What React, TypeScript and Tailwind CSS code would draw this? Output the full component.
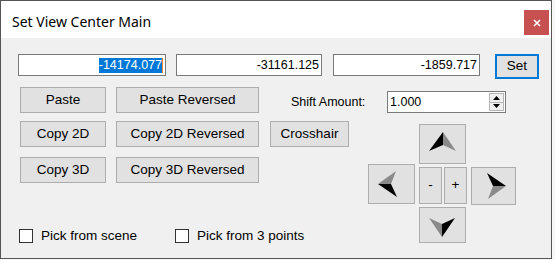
import React from "react";

function Btn({ w, h = 26, children, className = "" }: { w: number; h?: number; children?: React.ReactNode; className?: string }) {
  return (
    <div
      className={"flex items-center justify-center bg-[#e1e1e1] border border-[#adadad] text-[13.5px] text-black shrink-0 whitespace-nowrap " + className}
      style={{ width: w, height: h }}
    >
      {children}
    </div>
  );
}

function Field({ w, children }: { w: number; children?: React.ReactNode }) {
  return (
    <div
      className="h-[22px] bg-white border border-[#7a7a7a] flex items-center justify-end pr-[2px] text-[12.5px] text-black shrink-0"
      style={{ width: w }}
    >
      {children}
    </div>
  );
}

function Check({ label }: { label: string }) {
  return (
    <div className="flex items-center whitespace-nowrap">
      <div className="w-[14px] h-[14px] bg-white border border-[#333333] shrink-0" />
      <span className="ml-[8px] text-[13.5px] text-black">{label}</span>
    </div>
  );
}

export default function App() {
  return (
    <div className="w-[555px] h-[260px] bg-[#f7f7f7] overflow-hidden font-['Liberation_Sans',Arial,sans-serif]">
      <div className="w-[552px] h-[259px] border border-[#555555] flex flex-col bg-[#f0f0f0]">
        {/* title bar */}
        <div className="h-[37px] bg-white flex items-start justify-between pl-[11px] pr-[2px] shrink-0">
          <div className="pt-[11px] text-[14px] text-black font-['Noto_Sans',sans-serif] leading-[20px]">Set View Center Main</div>
          <div className="mt-[9px] w-[25px] h-[25px] bg-[#c75050] flex items-center justify-center">
            <svg width="8" height="8" viewBox="0 0 8 8">
              <path d="M1 1 L7 7 M7 1 L1 7" stroke="white" strokeWidth="1.6" />
            </svg>
          </div>
        </div>

        {/* body */}
        <div className="flex-1 flex flex-col pl-[17px] pt-[16px]">
          {/* row 1 */}
          <div className="flex items-start">
            <Field w={148}>
              <span className="bg-[#0078d7] text-white leading-[15px] h-[15px]">-14174.077</span>
              <span className="w-[1px] h-[15px] bg-[#ff8728]" />
            </Field>
            <div className="ml-[10px]">
              <Field w={146}>-31161.125</Field>
            </div>
            <div className="ml-[11px]">
              <Field w={147}>-1859.717</Field>
            </div>
            <div className="ml-[15px] w-[44px] h-[25px] border-2 border-[#0078d7] bg-[#e1e1e1] flex items-center justify-center text-[13.5px] text-black">
              Set
            </div>
          </div>

          {/* row 2 */}
          <div className="flex items-start mt-[8px] pl-[2px]">
            <Btn w={86}>Paste</Btn>
            <Btn w={143} className="ml-[10px]">Paste Reversed</Btn>
            <div className="ml-[32px] w-[96px] h-[22px] mt-[4px] flex items-center text-[12.5px] text-black whitespace-nowrap">Shift Amount:</div>
            <div className="mt-[4px] w-[119px] h-[22px] bg-white border border-[#7a7a7a] flex items-center justify-between pl-[2px] pr-[1px] text-[12.5px] text-black">
              <span>1.000</span>
              <div className="w-[15px] h-[18px] flex flex-col border border-[#b5b5b5] bg-[#f0f0f0]">
                <div className="flex-1 flex items-center justify-center border-b border-[#b5b5b5]">
                  <svg width="7" height="4" viewBox="0 0 7 4" className="shrink-0"><path d="M3.5 0 L7 4 L0 4 Z" fill="black" /></svg>
                </div>
                <div className="flex-1 flex items-center justify-center">
                  <svg width="7" height="4" viewBox="0 0 7 4" className="shrink-0"><path d="M0 0 L7 0 L3.5 4 Z" fill="black" /></svg>
                </div>
              </div>
            </div>
          </div>

          {/* rows 3+ */}
          <div className="flex items-start pl-[2px]">
            <div className="w-[348px] flex flex-col mt-[8px]">
              <div className="flex items-start">
                <Btn w={86}>Copy 2D</Btn>
                <Btn w={143} className="ml-[10px]">Copy 2D Reversed</Btn>
                <Btn w={79} className="ml-[11px]">Crosshair</Btn>
              </div>
              <div className="flex items-start mt-[10px]">
                <Btn w={86}>Copy 3D</Btn>
                <Btn w={143} className="ml-[10px]">Copy 3D Reversed</Btn>
              </div>
              <div className="flex items-center mt-[43px] -ml-[1px]">
                <div className="w-[156px] shrink-0">
                  <Check label="Pick from scene" />
                </div>
                <Check label="Pick from 3 points" />
              </div>
            </div>

            {/* arrow cluster */}
            <div className="flex items-start mt-[11px]">
              <Btn w={47} h={40} className="mt-[40px]">
                <svg width="45" height="38" viewBox="1 1 45 38" className="shrink-0">
                  <path d="M10 20 L28 7 L23 20 Z" fill="#8a8a8a" />
                  <path d="M10 20 L23 20 L29 33 Z" fill="black" />
                </svg>
              </Btn>
              <div className="flex flex-col ml-[4px]">
                <Btn w={47} h={40}>
                  <svg width="45" height="38" viewBox="1 1 45 38" className="shrink-0">
                    <path d="M24 8 L10 27 L24 21 Z" fill="black" />
                    <path d="M24 8 L24 21 L37 27 Z" fill="#8a8a8a" />
                  </svg>
                </Btn>
                <div className="flex mt-[3px]">
                  <Btn w={23} h={37} className="text-[11px]">-</Btn>
                  <Btn w={23} h={37} className="ml-[2px] text-[12px]">+</Btn>
                </div>
                <Btn w={47} h={36} className="mt-[3px]">
                  <svg width="45" height="34" viewBox="1 1 45 34" className="shrink-0">
                    <path d="M10 11 L23 17 L23 30 Z" fill="#8a8a8a" />
                    <path d="M23 17 L36 11 L23 30 Z" fill="black" />
                  </svg>
                </Btn>
              </div>
              <Btn w={45} h={38} className="mt-[43px] ml-[4px]">
                <svg width="43" height="36" viewBox="1 1 43 36" className="shrink-0">
                  <path d="M16 6 L35 19 L22 19 Z" fill="black" />
                  <path d="M22 19 L35 19 L17 32 Z" fill="#8a8a8a" />
                </svg>
              </Btn>
            </div>
          </div>
        </div>
      </div>
    </div>
  );
}
